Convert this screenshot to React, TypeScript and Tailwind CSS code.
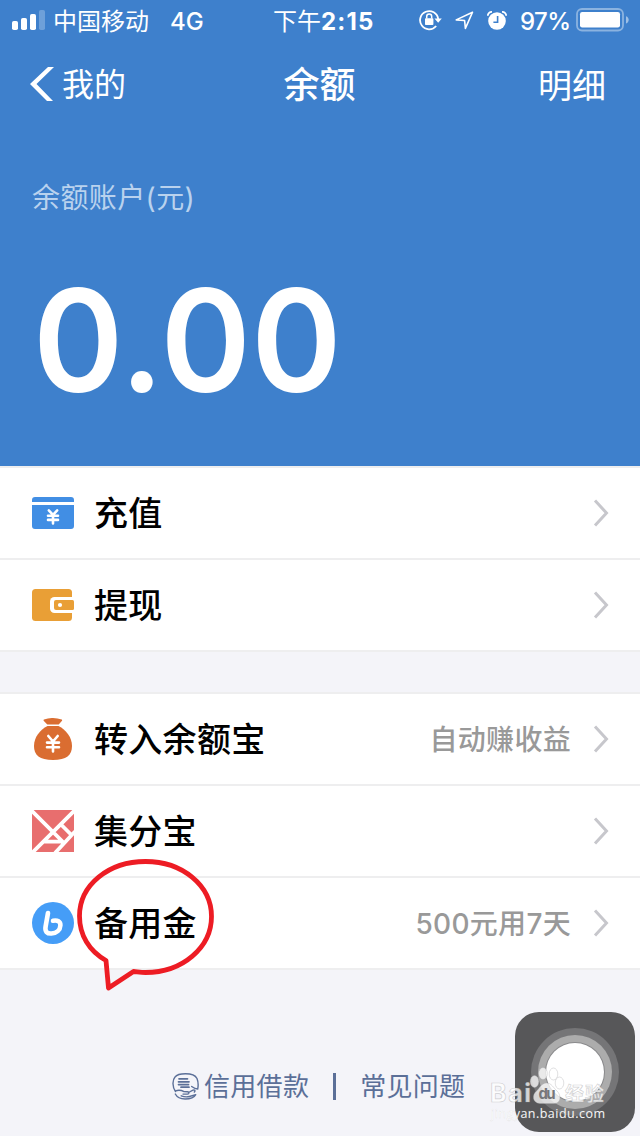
import type { ReactNode } from "react";

type MenuItem = {
  label: string;
  icon: ReactNode;
  note?: string;
  marked?: boolean;
};

function SignalIcon() {
  return (
    <svg width="33" height="20" viewBox="0 0 33 20" fill="#fff">
      <rect x="0" y="11" width="6" height="9" rx="1.8" />
      <rect x="9" y="8" width="6" height="12" rx="1.8" />
      <rect x="18" y="4" width="6" height="16" rx="1.8" />
      <rect x="27" y="0" width="6" height="20" rx="1.8" opacity="0.25" />
    </svg>
  );
}

function RotationLockIcon() {
  return (
    <svg width="23" height="22" viewBox="0 0 23 22" fill="none" stroke="#fff" strokeWidth="1.8">
      <path d="M17.2 17A9.1 9.1 0 1 1 19.2 10" />
      <path d="M15.4 9.4h7.4l-3.6 4.4z" fill="#fff" stroke="none" />
      <rect x="6" y="9.2" width="8.4" height="6.8" rx="0.8" fill="#fff" stroke="none" />
      <path d="M7.7 9.6V7.5a2.5 2.5 0 0 1 5 0v2.1" strokeWidth="1.5" />
    </svg>
  );
}

function LocationIcon() {
  return (
    <svg width="19" height="19" viewBox="0 0 19 19" fill="none" stroke="#fff" strokeWidth="1.6" strokeLinejoin="round">
      <path d="M17.5 1.2 1.2 8.9l8.4.6.8 7.9z" />
    </svg>
  );
}

function AlarmIcon() {
  return (
    <svg width="20" height="19" viewBox="0 0 20 19">
      <circle cx="10" cy="10" r="8.8" fill="#fff" />
      <path d="M.8 4.8A4 4 0 0 1 5 .9M19.2 4.8A4 4 0 0 0 15 .9" fill="none" stroke="#fff" strokeWidth="1.8" />
      <path d="M10.6 5v6.2H6.4" fill="none" stroke="#3e80cc" strokeWidth="1.6" />
    </svg>
  );
}

function BatteryIcon() {
  return (
    <svg width="54" height="24" viewBox="0 0 54 24">
      <rect x="1" y="1" width="46" height="21.5" rx="5" fill="none" stroke="#fff" strokeOpacity="0.4" strokeWidth="1.8" />
      <rect x="4" y="4" width="40" height="15.5" rx="2.2" fill="#fff" />
      <path d="M50 8.2c3.6 1.2 3.6 6 0 7.4z" fill="#fff" fillOpacity="0.5" />
    </svg>
  );
}

function RechargeIcon() {
  return (
    <svg width="42" height="32" viewBox="0 0 42 32">
      <path d="M3 0h36a3 3 0 0 1 3 3v2H0V3a3 3 0 0 1 3-3zM0 8h42v21a3 3 0 0 1-3 3H3a3 3 0 0 1-3-3z" fill="#418ee4" />
      <path d="m16.8 13.4 4.2 4.4 4.2-4.4M16 18.8h10M16 22.9h10M21 18v8.5" fill="none" stroke="#fff" strokeWidth="2.6" strokeLinecap="round" />
    </svg>
  );
}

function WalletIcon() {
  return (
    <svg width="42" height="32" viewBox="0 0 42 32">
      <rect width="40" height="32" rx="3.5" fill="#e99f36" />
      <path d="M42 8H22.5a4.5 4.5 0 0 0-4.5 4.5v7a4.5 4.5 0 0 0 4.5 4.5H42z" fill="#fff" />
      <path d="M40.5 11H24a2 2 0 0 0-2 2v6a2 2 0 0 0 2 2h16.5a1.5 1.5 0 0 0 1.5-1.5v-7a1.5 1.5 0 0 0-1.5-1.5z" fill="#e99f36" />
      <circle cx="28" cy="16" r="2.1" fill="#fff" />
    </svg>
  );
}

function MoneyBagIcon() {
  return (
    <svg width="42" height="42" viewBox="0 0 42 42">
      <path d="M12 1.6C15 .6 18-.1 21 0s6 .6 8.700 1.500c.6.3.5 1 .1 1.500L26.700 6.500H15.300L11.900 3.100c-.5-.5-.5-1.200.1-1.500z" fill="#da6d31" />
      <path d="M15.500 8h11C34 11.500 40 19.500 40 28c0 9-5.500 14-19 14S2 37 2 28C2 19.500 8 11.500 15.500 8z" fill="#da6d31" />
      <path d="m16.3 18 4.700 5.600 4.700-5.600M15 24.600h12M15 29.200h12M21 24v9.500" fill="none" stroke="#fff" strokeWidth="2.6" strokeLinecap="round" />
    </svg>
  );
}

function PointsIcon() {
  return (
    <svg width="42" height="42" viewBox="0 0 42 42">
      <rect width="42" height="42" fill="#e86e6e" />
      <path d="M-1 0 31 32M43 0 0 43M28 13.500 40 25.500M43 21.500 23 43M11 31.700h19" fill="none" stroke="#fff" strokeWidth="3.8" />
    </svg>
  );
}

function ReserveIcon() {
  return (
    <svg width="42" height="42" viewBox="0 0 42 42">
      <circle cx="21" cy="21" r="21" fill="#459df7" />
      <path d="M16 11 13.600 24.500c-1 5.200 1.600 7.300 5.900 7 5.100-.3 8.700-3.500 8.900-8.100.2-4-2.900-5.600-7.400-4.700" fill="none" stroke="#fff" strokeWidth="4.6" strokeLinecap="round" />
    </svg>
  );
}

// Hand drawn bubble round the label
function Bubble() {
  return (
    <svg className="absolute left-[-19px] top-[-42px]" width="140" height="134" viewBox="75 858 140 134" fill="none">
      <path
        d="M106 961.500C89 952 79.500 936 79.500 917c0-31 29-54.500 66-54.500s66 24 66 55-29 56-66 56c-4 0-7-.5-12-1l-25 16.500z"
        stroke="#ed1c24"
        strokeWidth="4.8"
        strokeLinejoin="round"
      />
    </svg>
  );
}

function CreditIcon() {
  return (
    <svg width="27" height="27" viewBox="0 0 27 27" fill="none" stroke="#5b6f98" strokeWidth="1.4" strokeLinecap="round" strokeLinejoin="round">
      <path d="M3.500 18.500C.2 14 .3 7 3 4c2.300-3 6-3.200 10.500-3.200 6 0 9.500.8 11.500 4.700 1.200 3 1.400 7 .7 10.500-2.500 0-4-1-6-2.500" />
      <path d="M7 5.800h8.500M6.500 8.800h10.500M6.500 11.600h10M9 14.200h8" strokeWidth="1.7" />
      <path d="M3.500 17.800c3-1 5.800-.7 8.500.8l3.500.2c2 .2 1.700 2.200 0 2.300h-4.500M16.500 19.500l4.500-2.300c1.800-.7 2.700.8 1.300 1.900M3.300 21c1.800 3.300 5.500 5 9.800 5 4.700 0 9-1.300 10.600-4.300l-6.200 1.800c-3 .8-5.800.3-8.300-.7" />
    </svg>
  );
}

const groups: MenuItem[][] = [
  [
    { label: "充值", icon: <RechargeIcon /> },
    { label: "提现", icon: <WalletIcon /> },
  ],
  [
    { label: "转入余额宝", icon: <MoneyBagIcon />, note: "自动赚收益" },
    { label: "集分宝", icon: <PointsIcon /> },
    { label: "备用金", icon: <ReserveIcon />, note: "500元用7天", marked: true },
  ],
];

function MenuRow({ item }: { item: MenuItem }) {
  return (
    <li className="flex h-[92px] items-center border-b-2 border-[#eeeeef] bg-white pl-8 pr-[31px]">
      <span className="flex w-[42px] shrink-0 justify-center">{item.icon}</span>
      <span className="relative ml-5 mt-[2px] text-[34px] font-medium leading-[50px] tracking-[0.3px] text-black">
        {item.label}
        {item.marked && <span className="absolute left-0 top-0"><Bubble /></span>}
      </span>
      {item.note && <span className="ml-auto mt-[2px] text-[28px] font-[450] tracking-[0.3px] text-[#999]">{item.note}</span>}
      <svg className={item.note ? "ml-[22px]" : "ml-auto"} width="16" height="28" viewBox="0 0 16 28" fill="none">
        <path d="M2 1.500 13.500 14 2 26.500" stroke="#c7c7cc" strokeWidth="3" />
      </svg>
    </li>
  );
}

function Watermark() {
  return (
    <svg className="absolute left-[485px] top-[1060px]" width="130" height="64" viewBox="485 1060 130 64">
      <g fill="#fff" fillOpacity="0.75" stroke="#a5a5a8" strokeOpacity="0.5" strokeWidth="0.7">
        <text x="490" y="1102" fontSize="25" textLength="41" className="font-['Inter'] font-bold">Bai</text>
        <ellipse cx="534.5" cy="1081.5" rx="4.3" ry="6" />
        <ellipse cx="543" cy="1073.5" rx="4.3" ry="6" />
        <ellipse cx="553.5" cy="1074" rx="4.3" ry="6" />
        <ellipse cx="559.5" cy="1083" rx="4.3" ry="6" />
        <path d="M546.500 1083c5 0 7 5 10.500 8s5.500 12-3 12.500h-14c-8-.5-8-9-3.500-12.500 3-2.500 5-8 10-8z" />
        <text x="565" y="1101" fontSize="19" textLength="39" className="font-['Noto_Sans_CJK_SC'] font-bold">经验</text>
      </g>
      <text x="538.5" y="1099" fontSize="15" textLength="17" className="fill-[#77777a] font-['Inter'] font-bold">du</text>
      <text x="491" y="1118" fontSize="12.5" textLength="114" fill="#fff" stroke="#b5b5b8" strokeOpacity="0.3" strokeWidth="0.4" className="font-['Open_Sans'] font-medium">
        jingyan.baidu.com
      </text>
    </svg>
  );
}

export default function App() {
  return (
    <div className="relative flex h-[1136px] w-[640px] flex-col overflow-hidden bg-[#f4f4f9] font-['Inter','Noto_Sans_CJK_SC',sans-serif]">
      <header className="h-[466px] shrink-0 bg-[#3e80cc] text-white">
        <div className="flex h-10 items-center text-2xl leading-10">
          <div className="flex w-[273px] items-center pl-3">
            <SignalIcon />
            <span className="ml-2 mt-[3px]">中国移动</span>
            <span className="ml-[21px] mt-[3px] font-[450]">4G</span>
          </div>
          <div className="mt-[3px] w-[146px]">
            下午<span className="font-bold tracking-[1.2px]">2:15</span>
          </div>
          <div className="flex flex-1 items-center">
            <RotationLockIcon />
            <span className="ml-[13px]"><LocationIcon /></span>
            <span className="ml-[13px]"><AlarmIcon /></span>
            <span className="ml-[13px] mt-[3px] w-[50px] whitespace-nowrap font-[450] tracking-tight">97%</span>
            <span className="ml-[6px]"><BatteryIcon /></span>
          </div>
        </div>

        <nav className="grid h-[88px] grid-cols-3 items-center pl-[30px] pr-[34px]">
          <div className="flex items-center">
            <svg width="24" height="34" viewBox="0 0 24 34" fill="#fff">
              <path d="M18 0h6L6.500 17 23 34h-6L0 17z" />
            </svg>
            <span className="ml-2 mt-[2px] text-[32px]">我的</span>
          </div>
          <h1 className="mt-[2px] pl-[3px] text-center text-4xl font-medium">余额</h1>
          <span className="mt-[2px] text-right text-[34px]">明细</span>
        </nav>

        <p className="mt-[48px] pl-8 text-[28px] leading-[44px] tracking-[0.4px] text-[#b9d2ee]">余额账户(元)</p>
        <p className="mt-[45px] pl-[33px] text-[142px] font-[580] leading-[150px]">
          <span className="inline-block origin-left scale-x-[0.965] tracking-[0.5px]">0.00</span>
        </p>
      </header>

      <main className="flex flex-col gap-10">
        {groups.map((items) => (
          <ul key={items[0].label} className="border-t-2 border-[#eeeeef]">
            {items.map((item) => (
              <MenuRow key={item.label} item={item} />
            ))}
          </ul>
        ))}
      </main>

      <footer className="mt-[96px] flex h-10 items-center pl-[172px] text-[26px] text-[#5b6f98]">
        <CreditIcon />
        <span className="ml-[5px] tracking-[0.3px]">信用借款</span>
        <span className="ml-[24px] h-[27px] w-[3px] bg-[#5b6f98]" />
        <span className="ml-6 tracking-[0.3px]">常见问题</span>
      </footer>

      <div className="absolute left-[515px] top-[1012px] flex size-[120px] items-center justify-center rounded-[24px] bg-[#575759]">
        <div className="flex size-[88px] items-center justify-center rounded-full bg-[#757577]">
          <div className="flex size-[74px] items-center justify-center rounded-full bg-[#acacac]">
            <div className="size-[58px] rounded-full bg-white ring-1 ring-[#8a8a8c]" />
          </div>
        </div>
      </div>
      <Watermark />
    </div>
  );
}
